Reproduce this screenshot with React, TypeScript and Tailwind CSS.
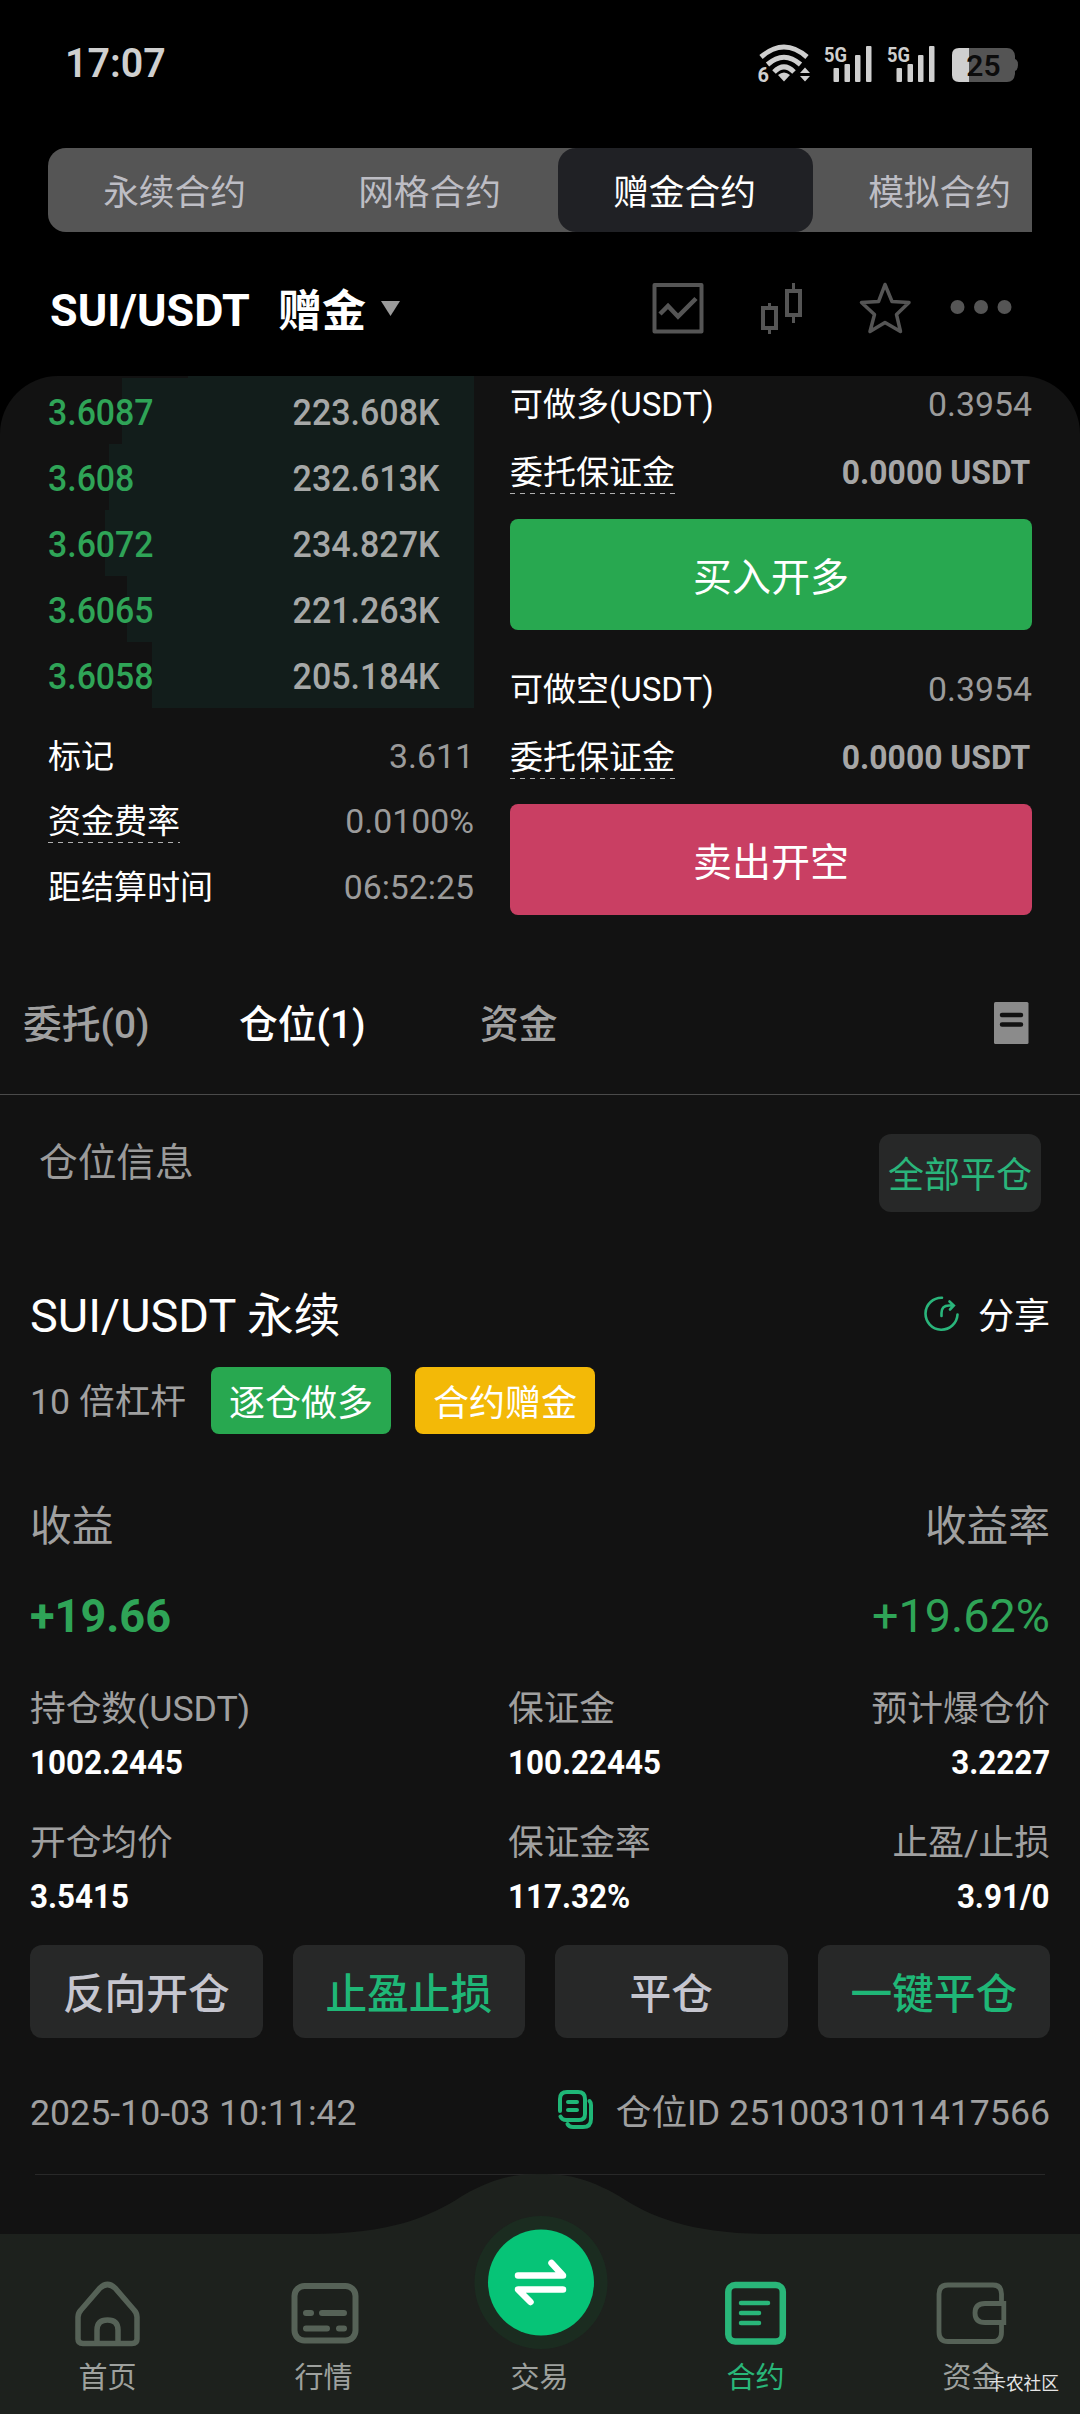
import React from "react";

const FONT = "font-['Roboto','Noto_Sans_CJK_SC',sans-serif]";

function Signal() {
  return (
    <svg width="50" height="40" viewBox="0 0 50 40" fill="#cfcfcf">
      <text x="0" y="18" fontSize="21" fontWeight="700" textLength="23" lengthAdjust="spacingAndGlyphs">5G</text>
      <rect x="9.500" y="24" width="5.500" height="14" rx="1" />
      <rect x="20.500" y="20" width="5.500" height="18" rx="1" />
      <rect x="31" y="11" width="5.500" height="27" rx="1" />
      <rect x="42" y="2" width="5.500" height="36" rx="1" />
    </svg>
  );
}

function StatusBar() {
  return (
    <div className="flex h-[148px] items-start justify-between pl-[65px] pr-[62px]">
      <div className="mt-[43px] origin-left scale-x-[0.96] text-[41px] leading-[40px] font-semibold text-[#cfcfcf]">17:07</div>
      <div className="mt-[44px] flex">
        <svg className="mr-[13px]" width="54" height="40" viewBox="0 0 54 40" fill="none" stroke="#cfcfcf" strokeWidth="5">
          <path d="M4 13 Q27 -7 50 13" />
          <path d="M10.500 20.500 Q27 6 43.500 20.500" />
          <path d="M17 28 Q27 18 37 28" />
          <path d="M27 37.500 L21 31 Q27 26 33 31Z" fill="#cfcfcf" stroke="none" />
          <path d="M43 29 L48 23.500 L53 29Z M43 32 L48 37.500 L53 32Z" fill="#cfcfcf" stroke="none" />
          <text x="0.500" y="37.500" fontSize="20" fontWeight="700" fill="#cfcfcf" stroke="none">6</text>
        </svg>
        <div className="mr-[13px]"><Signal /></div>
        <div className="mr-[15px]"><Signal /></div>
        <svg className="mt-[4px]" width="66" height="34" viewBox="0 0 66 34">
          <path d="M7 0H17V34H7Q0 34 0 27V7Q0 0 7 0Z" fill="#cfcfcf" />
          <path d="M17 0H55Q62 0 63 8V11Q66 12 66 17Q66 22 63 23V26Q62 34 55 34H17Z" fill="#545454" />
          <text x="31.500" y="28" fontSize="30" fontWeight="600" textAnchor="middle" fill="#0c0c0c">25</text>
        </svg>
      </div>
    </div>
  );
}

function ContractTabs() {
  const tabs = ["永续合约", "网格合约", "赠金合约", "模拟合约"];
  return (
    <div className="mx-[48px] flex h-[84px] overflow-hidden rounded-l-[18px] bg-[#555555]">
      {tabs.map((t) => (
        <div
          key={t}
          className={
            t === "赠金合约"
              ? "flex w-[255px] shrink-0 items-center justify-center rounded-[18px] bg-[#202125] pt-[6px] pr-[2px] text-[35.700px] leading-[50px] text-white"
              : "flex w-[255px] shrink-0 items-center justify-center pt-[6px] pr-[2px] text-[35.700px] leading-[50px] text-[#bdbdc4]"
          }
        >
          {t}
        </div>
      ))}
    </div>
  );
}

function PairHeader() {
  return (
    <div className="flex h-[144px] items-center justify-between pt-[8px] pl-[50px] pr-[66px]">
      <div className="flex items-center">
        <div className="mt-[6px] w-[228px] text-[44px] leading-[50px] font-bold text-white">
          <span className="inline-block origin-left scale-x-[1.02]">SUI/USDT</span>
        </div>
        <div className="mt-[7px] text-[44px] leading-[50px] font-bold text-white">赠金</div>
        <svg className="ml-[15px]" width="20" height="15" viewBox="0 0 20 15" fill="#9a9a9a"><path d="M0 0H19L9.500 15Z" /></svg>
      </div>
      <svg width="362" height="52" viewBox="652 282 362 52" fill="none" stroke="#555555">
        <rect x="654.500" y="285" width="47" height="46.500" strokeWidth="4" strokeLinejoin="round" />
        <path d="M660 314L668 306L678 316.500L696 298.500" strokeWidth="4.500" />
        <path d="M763 308H776V328H763Z M787 291H800V315H787Z" strokeWidth="4" />
        <path d="M769.500 303V308M769.500 328V334M793.500 283V291M793.500 315V323" strokeWidth="3" />
        <path d="M885 284.500L892 301.500L909 302.500L896.500 314.500L900.500 331.500L885 322.500L870 331.500L874.500 314.500L861.500 302.500L878.500 301.500Z" strokeWidth="3.500" strokeLinejoin="round" />
        <g fill="#555555" stroke="none">
          <circle cx="957.500" cy="307" r="7" />
          <circle cx="981" cy="307" r="7" />
          <circle cx="1004.500" cy="307" r="7" />
        </g>
      </svg>
    </div>
  );
}

function Dashed({ children }: { children: React.ReactNode }) {
  return (
    <span className="relative">
      {children}
      <span className="absolute inset-x-0 bottom-[-2px] h-[1.500px] bg-[repeating-linear-gradient(90deg,#b0b0b0_0_5px,transparent_5px_10px)]" />
    </span>
  );
}

const bids = [
  { price: "3.6087", qty: "223.608K", w: 352 },
  { price: "3.608", qty: "232.613K", w: 365 },
  { price: "3.6072", qty: "234.827K", w: 369 },
  { price: "3.6065", qty: "221.263K", w: 347 },
  { price: "3.6058", qty: "205.184K", w: 322 },
];

const stats = "flex h-[65.500px] items-center justify-between pt-[2px] pl-[48px]";

function OrderBook() {
  return (
    <div className="w-[474px]">
      <div className="ml-auto h-[2px] w-[286px] bg-[#121d1b]" />
      {bids.map((b) => (
        <div key={b.price} className="relative flex h-[66px] items-center justify-between pt-[3px] pl-[48px] pr-[34px] text-[36px] leading-[44px] font-medium">
          <div className="absolute inset-y-0 right-0 bg-[#121d1b]" style={{ width: b.w }} />
          <span className="relative origin-left scale-x-[0.94] text-[#2fa457]">{b.price}</span>
          <span className="relative origin-right scale-x-[0.945] text-[#a6a8a7]">{b.qty}</span>
        </div>
      ))}
      <div className="mt-[15px] text-[33px] leading-[40px]">
        <div className={stats}>
          <span className="text-white">标记</span><span className="text-[33.800px] text-[#9b9b9b]">3.611</span>
        </div>
        <div className={stats}>
          <span className="text-white"><Dashed>资金费率</Dashed></span><span className="text-[33.800px] text-[#9b9b9b]">0.0100%</span>
        </div>
        <div className={stats}>
          <span className="text-white">距结算时间</span><span className="text-[33.800px] text-[#9b9b9b]">06:52:25</span>
        </div>
      </div>
    </div>
  );
}

function OrderSide({ label, action, long }: { label: string; action: string; long: boolean }) {
  return (
    <div className="text-[33px] leading-[40px]">
      <div className="flex h-[57px] items-center justify-between">
        <span className="pt-px text-white">{label}</span>
        <span className="text-[33.800px] text-[#9b9b9b]">0.3954</span>
      </div>
      <div className="flex h-[78px] items-center justify-between pt-[2px] pr-[2px]">
        <span className="text-white"><Dashed>委托保证金</Dashed></span>
        <span className="origin-right scale-x-[0.965] font-bold text-[#a6a6a6]">0.0000 USDT</span>
      </div>
      <button
        className={
          long
            ? "mt-[8px] flex h-[111px] w-full items-center justify-center rounded-[8px] bg-[#28a850] pt-[6px] text-[39px] leading-[50px] text-white"
            : "mt-[8px] flex h-[111px] w-full items-center justify-center rounded-[8px] bg-[#c93f63] pt-[6px] text-[39px] leading-[50px] text-white"
        }
      >
        {action}
      </button>
    </div>
  );
}

function PositionTabs() {
  return (
    <div className="flex h-[174px] items-center border-b border-[#4a4a4a] pt-[35px] pl-[23px] pr-[51px] text-[38.800px] leading-[50px] font-medium text-[#a0a0a0]">
      <div className="w-[216px]">委托(0)</div>
      <div className="w-[241px] text-white">仓位(1)</div>
      <div className="flex-1">资金</div>
      <svg className="mb-[5px]" width="35" height="42" viewBox="0 0 35 42">
        <rect width="34.500" height="42" rx="1.500" fill="#8b8b8b" />
        <path d="M8 13H27M8 22.500H27" stroke="#121212" strokeWidth="4.500" strokeLinecap="round" />
      </svg>
    </div>
  );
}

function Metrics({ labels, values }: { labels: string[]; values: string[] }) {
  return (
    <>
      <div className="flex h-[50px] items-center pt-[3px] text-[35.700px] leading-[50px] text-[#a0a0a0]">
        <div className="w-[478px]">{labels[0]}</div>
        <div className="flex-1">{labels[1]}</div>
        <div>{labels[2]}</div>
      </div>
      <div className="mt-[5px] flex h-[50px] items-center pt-px text-[33px] leading-[50px] font-bold text-white">
        <div className="w-[478px]"><span className="inline-block origin-left scale-x-[0.95]">{values[0]}</span></div>
        <div className="flex-1"><span className="inline-block origin-left scale-x-[0.95]">{values[1]}</span></div>
        <div className="origin-right scale-x-[0.95]">{values[2]}</div>
      </div>
    </>
  );
}

function Position() {
  const gray = "flex flex-1 items-center justify-center rounded-[12px] bg-[#272828] pt-[6px] text-[#c6c6cf]";
  const green = "flex flex-1 items-center justify-center rounded-[12px] bg-[#272828] pt-[6px] text-[#1fb777]";
  return (
    <div className="px-[30px]">
      <div className="flex items-start justify-between pt-[39px] pl-[9px] pr-[9px]">
        <div className="mt-[4px] text-[38.700px] leading-[50px] text-[#9b9b9b]">仓位信息</div>
        <button className="flex h-[78px] w-[162px] items-center justify-center rounded-[12px] bg-[#272828] pt-[6px] text-[36px] leading-[50px] text-[#2ab57b]">全部平仓</button>
      </div>
      <div className="mt-[74px] flex h-[60px] items-center justify-between">
        <div className="text-[46.800px] leading-[60px] text-white">SUI/USDT 永续</div>
        <div className="flex items-center text-[36px] leading-[50px] text-white">
          <svg className="mr-[18px] mb-[5px]" width="36" height="36" viewBox="0 0 36 36" fill="none" stroke="#2ab57b" strokeWidth="2.600" strokeLinecap="round">
            <path d="M18 1.700A16 16 0 1 0 33.500 18.500" />
            <path d="M17.500 20V17Q17.500 9.500 25 9.500H29.500M25.500 5.500L29.800 9.500L26 13.500" />
          </svg>
          <span className="pt-[2px]">分享</span>
        </div>
      </div>
      <div className="mt-[21px] flex h-[67px] items-center text-[36px] leading-[50px]">
        <div className="w-[181px] pt-[3px] text-[35.700px] text-[#a0a0a0]">10 倍杠杆</div>
        <div className="flex h-[67px] w-[180px] items-center justify-center rounded-[8px] bg-[#28a850] pt-[6px] text-white">逐仓做多</div>
        <div className="ml-[24px] flex h-[67px] w-[180px] items-center justify-center rounded-[8px] bg-[#f3b907] pt-[6px] text-white">合约赠金</div>
      </div>
      <div className="mt-[63px] flex h-[60px] items-center justify-between text-[41.700px] text-[#a0a0a0]">
        <div>收益</div>
        <div>收益率</div>
      </div>
      <div className="mt-[29px] flex h-[60px] items-center justify-between leading-[60px] text-[#2fa457]">
        <div className="origin-left scale-x-[0.98] text-[46px] font-bold">+19.66</div>
        <div className="text-[46.700px]">+19.62%</div>
      </div>
      <div className="mt-[36px]"><Metrics labels={["持仓数(USDT)", "保证金", "预计爆仓价"]} values={["1002.2445", "100.22445", "3.2227"]} /></div>
      <div className="mt-[29px]"><Metrics labels={["开仓均价", "保证金率", "止盈/止损"]} values={["3.5415", "117.32%", "3.91/0"]} /></div>
      <div className="mt-[24px] flex h-[93px] gap-[30px] text-[41.700px] leading-[60px] font-medium">
        <button className={gray}>反向开仓</button>
        <button className={green}>止盈止损</button>
        <button className={gray}>平仓</button>
        <button className={green}>一键平仓</button>
      </div>
      <div className="mt-[50px] flex h-[50px] items-center text-[35.700px] leading-[50px] text-[#a0a0a0]">
        <div className="flex-1">2025-10-03 10:11:42</div>
        <svg className="mr-[22px] mb-[7px]" width="36" height="40" viewBox="0 0 36 40" fill="none" stroke="#1fb777" strokeWidth="4" strokeLinecap="round" strokeLinejoin="round">
          <path d="M2 21V9Q2 2 9 2H20Q27 2 27 9V24Q27 30 21 30H8Q4 30 2.500 26.500" />
          <path d="M31.500 11Q33 12.500 33 15V29Q33 37 25 37H15Q11 37 9.500 34" />
          <path d="M10 12H19M10 20H19" />
        </svg>
        <div>仓位ID 2510031011417566</div>
      </div>
      <div className="mt-[36px] mr-[5px] ml-[5px] h-px bg-[#292929]" />
    </div>
  );
}

const navIcons = [
  <g key="home" stroke="#566257" strokeWidth="5.500">
    <path d="M78 2317Q78 2313 81 2310L100 2288Q107.500 2281 115 2288L134 2310Q137 2313 137 2317V2339Q137 2343.500 132 2343.500H83Q78 2343.500 78 2339Z" />
    <path d="M97 2343V2330Q97 2320 107.500 2320Q118 2320 118 2330V2343" />
  </g>,
  <g key="market" stroke="#566257" strokeWidth="6" strokeLinecap="round">
    <rect x="294.500" y="2286" width="61" height="54.500" rx="10" />
    <path d="M306 2313H311M322 2313H344M306 2328.500H327M339 2328.500H344" />
  </g>,
  <g key="trade">
    <circle cx="541" cy="2282.500" r="66.500" fill="#1b2c20" />
    <circle cx="541" cy="2282.500" r="53" fill="#06c477" />
    <path d="M518 2275.500H563L551.500 2263M563 2289.500H518L530.500 2302" stroke="#ffffff" strokeWidth="6.500" strokeLinecap="round" strokeLinejoin="round" />
  </g>,
  <g key="contract" stroke="#29b679" strokeWidth="6.500">
    <rect x="728.300" y="2285" width="54.500" height="56.500" rx="7" />
    <path d="M741 2303H768M741 2313H759M741 2323H759" strokeWidth="4.500" strokeLinecap="round" />
  </g>,
  <g key="funds" stroke="#566257" strokeWidth="4.800">
    <path d="M1001.500 2302V2294Q1001.500 2285 993 2285H948Q939 2285 939 2294V2332Q939 2341.500 948 2341.500H993Q1001.500 2341.500 1001.500 2332V2325" />
    <path d="M1006 2303.500H985Q975 2303.500 975 2313Q975 2322.500 985 2322.500H1006M1003.800 2301V2325" />
  </g>,
];
const navLabels = ["首页", "行情", "交易", "合约", "资金"];
const navBoxes = ["0 2210 216 142", "216 2210 216 142", "432 2210 216 142", "648 2210 216 142", "864 2210 216 142"];

function BottomNav() {
  return (
    <nav className="relative -mt-px h-[240px]">
      <svg className="absolute inset-0" width="1080" height="240" viewBox="0 2174 1080 240">
        <path d="M0 2234H310C390 2234 430 2217 462 2196C495 2177 515 2174 540.500 2174C566 2174 586 2177 619 2196C651 2217 691 2234 771 2234H1080V2414H0Z" fill="#1d211d" />
      </svg>
      <div className="relative flex pt-[36px]">
        {navLabels.map((label, i) => (
          <div key={label} className="flex w-[216px] flex-col items-center">
            <svg width="216" height="142" viewBox={navBoxes[i]} fill="none">{navIcons[i]}</svg>
            <div className={label === "合约" ? "mt-[6px] pr-px text-[29px] leading-[40px] text-[#29b679]" : "mt-[6px] pr-px text-[29px] leading-[40px] text-[#9ea19e]"}>{label}</div>
          </div>
        ))}
      </div>
      <div className="absolute right-[21px] bottom-[20px] text-[17.700px] leading-[20px] text-[#e4e4e4]">卡农社区</div>
    </nav>
  );
}

export default function App() {
  return (
    <div className={`h-[2414px] w-[1080px] overflow-hidden bg-black ${FONT}`}>
      <StatusBar />
      <ContractTabs />
      <PairHeader />
      <main className="overflow-hidden rounded-t-[58px] bg-[#121212]">
        <div className="flex h-[545px] gap-[36px]">
          <OrderBook />
          <div className="flex w-[522px] flex-col gap-[31px]">
            <OrderSide label="可做多(USDT)" action="买入开多" long />
            <OrderSide label="可做空(USDT)" action="卖出开空" long={false} />
          </div>
        </div>
        <PositionTabs />
        <Position />
        <BottomNav />
      </main>
    </div>
  );
}
